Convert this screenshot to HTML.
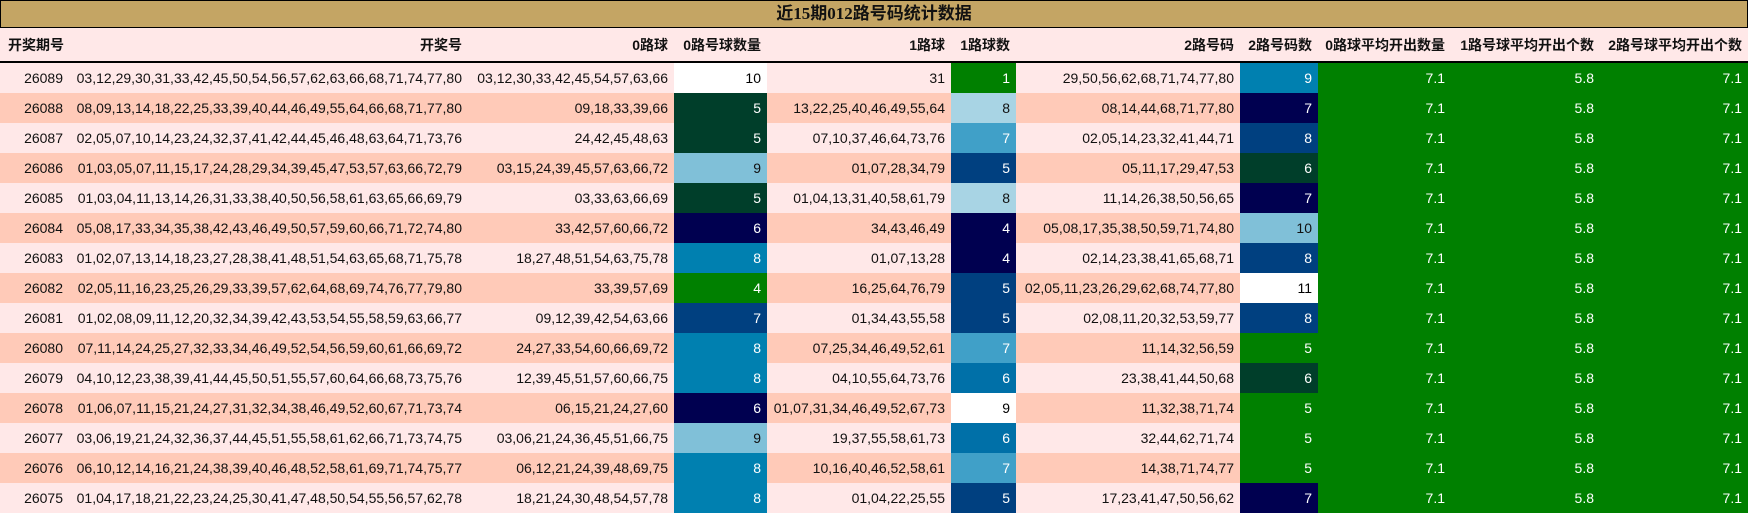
<!DOCTYPE html>
<html><head><meta charset="utf-8"><style>
body{margin:0;width:1748px;height:514px;overflow:hidden;background:#fff;font-family:"Liberation Sans","Noto Sans CJK SC",sans-serif;}
.title{position:absolute;left:0;top:0;width:1746px;height:26px;background:#c4a564;border:1px solid #000;text-align:center;font-weight:bold;font-size:17px;line-height:26px;color:#111;font-family:"Liberation Serif","Noto Sans CJK SC",serif;}
table{position:absolute;left:0;top:28px;border-collapse:collapse;table-layout:fixed;width:1748px;}
td,th{padding:0 6px 0 0;text-align:right;font-size:14px;white-space:nowrap;overflow:hidden;height:30px;color:#111;}
th{height:33px;background:#ffe8e8;font-weight:bold;border-bottom:2px solid #000;}
th:first-child{text-align:left;padding-left:8px;}
tr.a td{background:#ffe8e8}
tr.b td{background:#ffcab8}
td.g{background:#008000!important;color:#fff}
.w{background:#fff!important;color:#000!important}
.dg{background:#003e2a!important;color:#fff}
.lb{background:#80c0d8!important;color:#111}
.xb{background:#a8d4e4!important;color:#111}
.mb{background:#0080b0!important;color:#fff}
.tb{background:#40a0c8!important;color:#fff}
.sb{background:#0070a8!important;color:#fff}
.db{background:#004080!important;color:#fff}
.nv{background:#000050!important;color:#fff}
.gg{background:#008000!important;color:#fff}
</style></head><body>
<div class="title">近15期012路号码统计数据</div>
<table>
<colgroup><col style="width:69px"><col style="width:399px"><col style="width:206px"><col style="width:93px"><col style="width:184px"><col style="width:65px"><col style="width:224px"><col style="width:78px"><col style="width:133px"><col style="width:149px"><col style="width:148px"></colgroup>
<tr><th>开奖期号</th><th>开奖号</th><th>0路球</th><th>0路号球数量</th><th>1路球</th><th>1路球数</th><th>2路号码</th><th>2路号码数</th><th>0路球平均开出数量</th><th>1路号球平均开出个数</th><th>2路号球平均开出个数</th></tr>
<tr class="a"><td>26089</td><td>03,12,29,30,31,33,42,45,50,54,56,57,62,63,66,68,71,74,77,80</td><td>03,12,30,33,42,45,54,57,63,66</td><td class="w">10</td><td>31</td><td class="gg">1</td><td>29,50,56,62,68,71,74,77,80</td><td class="mb">9</td><td class="g">7.1</td><td class="g">5.8</td><td class="g">7.1</td></tr>
<tr class="b"><td>26088</td><td>08,09,13,14,18,22,25,33,39,40,44,46,49,55,64,66,68,71,77,80</td><td>09,18,33,39,66</td><td class="dg">5</td><td>13,22,25,40,46,49,55,64</td><td class="xb">8</td><td>08,14,44,68,71,77,80</td><td class="nv">7</td><td class="g">7.1</td><td class="g">5.8</td><td class="g">7.1</td></tr>
<tr class="a"><td>26087</td><td>02,05,07,10,14,23,24,32,37,41,42,44,45,46,48,63,64,71,73,76</td><td>24,42,45,48,63</td><td class="dg">5</td><td>07,10,37,46,64,73,76</td><td class="tb">7</td><td>02,05,14,23,32,41,44,71</td><td class="db">8</td><td class="g">7.1</td><td class="g">5.8</td><td class="g">7.1</td></tr>
<tr class="b"><td>26086</td><td>01,03,05,07,11,15,17,24,28,29,34,39,45,47,53,57,63,66,72,79</td><td>03,15,24,39,45,57,63,66,72</td><td class="lb">9</td><td>01,07,28,34,79</td><td class="db">5</td><td>05,11,17,29,47,53</td><td class="dg">6</td><td class="g">7.1</td><td class="g">5.8</td><td class="g">7.1</td></tr>
<tr class="a"><td>26085</td><td>01,03,04,11,13,14,26,31,33,38,40,50,56,58,61,63,65,66,69,79</td><td>03,33,63,66,69</td><td class="dg">5</td><td>01,04,13,31,40,58,61,79</td><td class="xb">8</td><td>11,14,26,38,50,56,65</td><td class="nv">7</td><td class="g">7.1</td><td class="g">5.8</td><td class="g">7.1</td></tr>
<tr class="b"><td>26084</td><td>05,08,17,33,34,35,38,42,43,46,49,50,57,59,60,66,71,72,74,80</td><td>33,42,57,60,66,72</td><td class="nv">6</td><td>34,43,46,49</td><td class="nv">4</td><td>05,08,17,35,38,50,59,71,74,80</td><td class="lb">10</td><td class="g">7.1</td><td class="g">5.8</td><td class="g">7.1</td></tr>
<tr class="a"><td>26083</td><td>01,02,07,13,14,18,23,27,28,38,41,48,51,54,63,65,68,71,75,78</td><td>18,27,48,51,54,63,75,78</td><td class="mb">8</td><td>01,07,13,28</td><td class="nv">4</td><td>02,14,23,38,41,65,68,71</td><td class="db">8</td><td class="g">7.1</td><td class="g">5.8</td><td class="g">7.1</td></tr>
<tr class="b"><td>26082</td><td>02,05,11,16,23,25,26,29,33,39,57,62,64,68,69,74,76,77,79,80</td><td>33,39,57,69</td><td class="gg">4</td><td>16,25,64,76,79</td><td class="db">5</td><td>02,05,11,23,26,29,62,68,74,77,80</td><td class="w">11</td><td class="g">7.1</td><td class="g">5.8</td><td class="g">7.1</td></tr>
<tr class="a"><td>26081</td><td>01,02,08,09,11,12,20,32,34,39,42,43,53,54,55,58,59,63,66,77</td><td>09,12,39,42,54,63,66</td><td class="db">7</td><td>01,34,43,55,58</td><td class="db">5</td><td>02,08,11,20,32,53,59,77</td><td class="db">8</td><td class="g">7.1</td><td class="g">5.8</td><td class="g">7.1</td></tr>
<tr class="b"><td>26080</td><td>07,11,14,24,25,27,32,33,34,46,49,52,54,56,59,60,61,66,69,72</td><td>24,27,33,54,60,66,69,72</td><td class="mb">8</td><td>07,25,34,46,49,52,61</td><td class="tb">7</td><td>11,14,32,56,59</td><td class="gg">5</td><td class="g">7.1</td><td class="g">5.8</td><td class="g">7.1</td></tr>
<tr class="a"><td>26079</td><td>04,10,12,23,38,39,41,44,45,50,51,55,57,60,64,66,68,73,75,76</td><td>12,39,45,51,57,60,66,75</td><td class="mb">8</td><td>04,10,55,64,73,76</td><td class="sb">6</td><td>23,38,41,44,50,68</td><td class="dg">6</td><td class="g">7.1</td><td class="g">5.8</td><td class="g">7.1</td></tr>
<tr class="b"><td>26078</td><td>01,06,07,11,15,21,24,27,31,32,34,38,46,49,52,60,67,71,73,74</td><td>06,15,21,24,27,60</td><td class="nv">6</td><td>01,07,31,34,46,49,52,67,73</td><td class="w">9</td><td>11,32,38,71,74</td><td class="gg">5</td><td class="g">7.1</td><td class="g">5.8</td><td class="g">7.1</td></tr>
<tr class="a"><td>26077</td><td>03,06,19,21,24,32,36,37,44,45,51,55,58,61,62,66,71,73,74,75</td><td>03,06,21,24,36,45,51,66,75</td><td class="lb">9</td><td>19,37,55,58,61,73</td><td class="sb">6</td><td>32,44,62,71,74</td><td class="gg">5</td><td class="g">7.1</td><td class="g">5.8</td><td class="g">7.1</td></tr>
<tr class="b"><td>26076</td><td>06,10,12,14,16,21,24,38,39,40,46,48,52,58,61,69,71,74,75,77</td><td>06,12,21,24,39,48,69,75</td><td class="mb">8</td><td>10,16,40,46,52,58,61</td><td class="tb">7</td><td>14,38,71,74,77</td><td class="gg">5</td><td class="g">7.1</td><td class="g">5.8</td><td class="g">7.1</td></tr>
<tr class="a"><td>26075</td><td>01,04,17,18,21,22,23,24,25,30,41,47,48,50,54,55,56,57,62,78</td><td>18,21,24,30,48,54,57,78</td><td class="mb">8</td><td>01,04,22,25,55</td><td class="db">5</td><td>17,23,41,47,50,56,62</td><td class="nv">7</td><td class="g">7.1</td><td class="g">5.8</td><td class="g">7.1</td></tr>
</table>
</body></html>
